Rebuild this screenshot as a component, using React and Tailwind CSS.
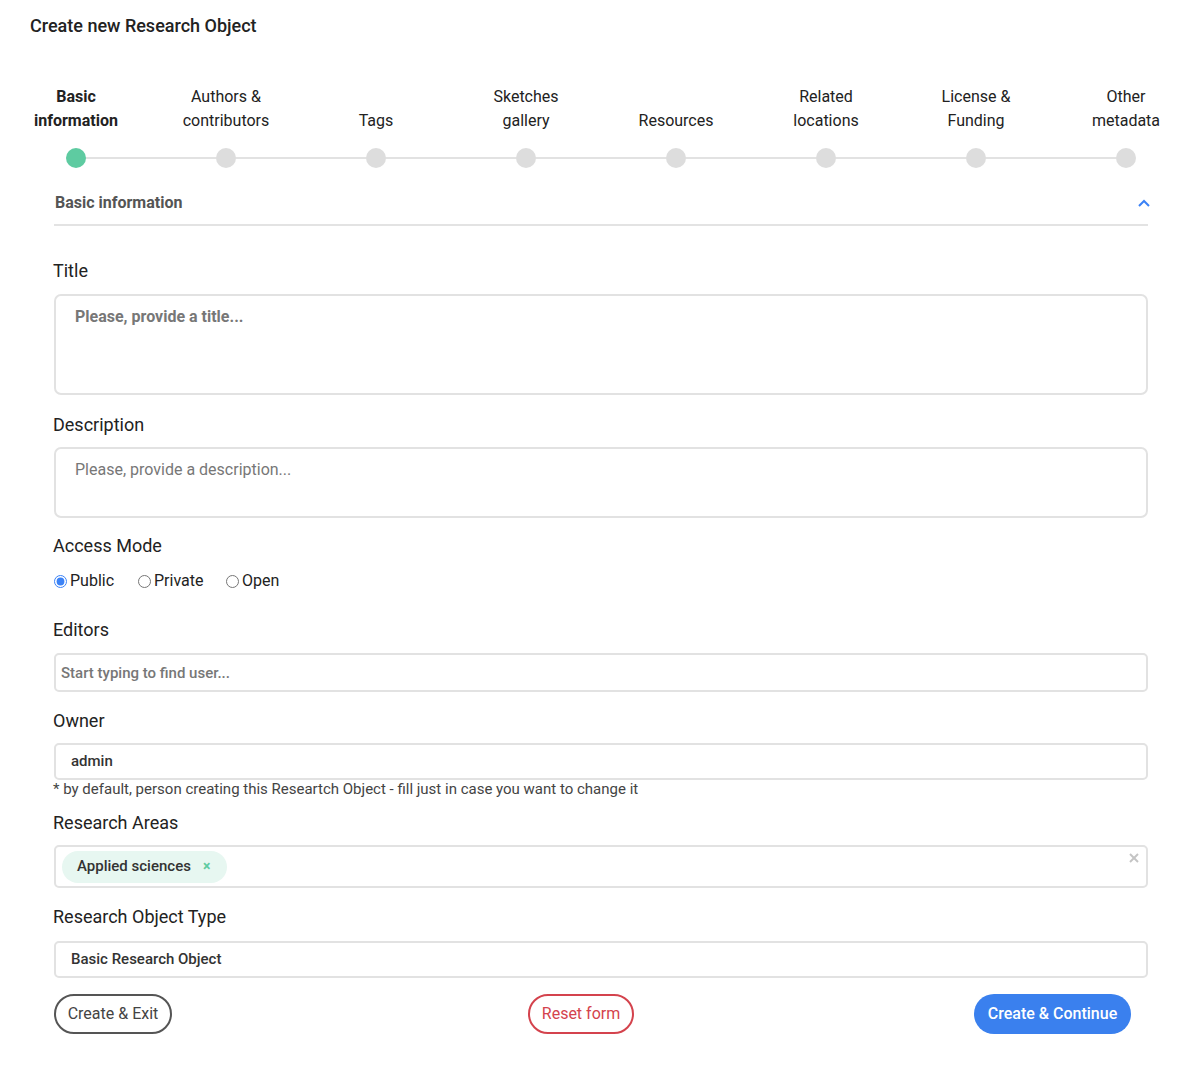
import { useState } from 'react'

const steps = [
  ['Basic', 'information'],
  ['Authors &', 'contributors'],
  ['Tags'],
  ['Sketches', 'gallery'],
  ['Resources'],
  ['Related', 'locations'],
  ['License &', 'Funding'],
  ['Other', 'metadata'],
]

function Label({ children, className = '' }) {
  return (
    <div className={`text-[18px] leading-6 text-[#222] ${className}`}>{children}</div>
  )
}

export default function App() {
  const [access, setAccess] = useState('public')

  return (
    <div className="w-[1194px] min-h-[1074px] overflow-hidden bg-white font-['Roboto','Liberation_Sans',sans-serif] text-[#222]">
      {/* header */}
      <div className="px-[30px] pt-[14px] text-[18px] leading-6 font-medium text-[#222]">
        Create new Research Object
      </div>

      {/* stepper */}
      <div className="mt-[47px] ml-[1px] w-[1200px]">
        <div className="grid grid-cols-[repeat(8,150px)]">
          {steps.map((lines, i) => (
            <div
              key={i}
              className={`h-12 flex flex-col justify-end items-center text-center text-[16px] leading-6 ${
                i === 0 ? 'font-bold text-[#222]' : 'text-[#222]'
              }`}
            >
              {lines.map((l) => (
                <span key={l}>{l}</span>
              ))}
            </div>
          ))}
        </div>
        <div className="relative mt-[15px] grid grid-cols-[repeat(8,150px)]">
          <div className="absolute left-[75px] right-[75px] top-[9px] h-[2px] bg-[#e2e2e2]" />
          {steps.map((_, i) => (
            <div key={i} className="flex justify-center">
              <div
                className={`relative w-5 h-5 rounded-full ${i === 0 ? 'bg-[#5ecba1]' : 'bg-[#dddddd]'}`}
              />
            </div>
          ))}
        </div>
      </div>

      <div className="ml-[54px] w-[1094px]">
        {/* section header */}
        <div className="mt-[23px] flex items-center justify-between border-b-2 border-[#e3e3e3] pb-[9px]">
          <span className="pl-[1px] text-[16px] leading-6 font-bold text-[#555]">Basic information</span>
          <svg className="mr-[-3px] w-[14px] h-[10px]" viewBox="0 0 14 10" fill="none" stroke="#3b82f6" strokeWidth="2">
            <polyline points="2,8 7,3 12,8" />
          </svg>
        </div>

        {/* title */}
        <Label className="mt-[33px] -ml-[1px]">Title</Label>
        <textarea
          className="mt-[11px] block w-full h-[101px] resize-none rounded-[7px] border-2 border-[#e2e2e2] px-[19px] py-[10px] text-[16px] leading-[22px] outline-none placeholder:font-bold placeholder:text-[#777]"
          placeholder="Please, provide a title..."
        />

        {/* description */}
        <Label className="mt-[18px] -ml-[1px]">Description</Label>
        <textarea
          className="mt-[10px] block w-full h-[71px] resize-none rounded-[7px] border-2 border-[#e2e2e2] px-[19px] py-[10px] text-[16px] leading-[22px] outline-none placeholder:text-[#777]"
          placeholder="Please, provide a description..."
        />

        {/* access mode */}
        <Label className="mt-[16px] -ml-[1px]">Access Mode</Label>
        <div className="mt-[13px] flex items-center h-5 text-[16px] text-[#222]">
          {[
            ['public', 'Public', 'w-[84px]'],
            ['private', 'Private', 'w-[88px]'],
            ['open', 'Open', ''],
          ].map(([v, l, w]) => (
            <label key={v} className={`flex items-center gap-[3px] ${w}`}>
              <input
                type="radio"
                name="access"
                checked={access === v}
                onChange={() => setAccess(v)}
                className="m-0 w-[13px] h-[13px] accent-[#3b82f6]"
              />
              {l}
            </label>
          ))}
        </div>

        {/* editors */}
        <Label className="mt-[27px] -ml-[1px]">Editors</Label>
        <input
          className="mt-[11px] block w-full h-[39px] rounded-[5px] border-2 border-[#e2e2e2] px-[5px] text-[15px] font-medium outline-none placeholder:text-[#777]"
          placeholder="Start typing to find user..."
        />

        {/* owner */}
        <Label className="mt-[17px] -ml-[1px]">Owner</Label>
        <div className="mt-[10px] flex items-center w-full h-[37px] rounded-[5px] border-2 border-[#e2e2e2] px-[15px] text-[15px] font-medium text-[#333]">
          admin
        </div>
        <div className="-ml-[1px] text-[15px] leading-[18px] text-[#444]">
          * by default, person creating this Researtch Object - fill just in case you want to change it
        </div>

        {/* research areas */}
        <Label className="mt-[13px] -ml-[1px]">Research Areas</Label>
        <div className="mt-[10px] relative flex items-center w-full h-[43px] rounded-[5px] border-2 border-[#e2e2e2] px-[6px]">
          <div className="flex items-center h-[32px] rounded-full bg-[#e7f7f1] pl-[15px] pr-[17px] text-[15px] font-medium text-[#333]">
            Applied sciences
            <span className="ml-[12px] text-[14px] font-bold text-[#5ecba1]">×</span>
          </div>
          <svg className="absolute right-[7px] top-[6px] w-[10px] h-[10px]" viewBox="0 0 10 10" stroke="#c4c4c4" strokeWidth="2">
            <line x1="1" y1="1" x2="9" y2="9" />
            <line x1="9" y1="1" x2="1" y2="9" />
          </svg>
        </div>

        {/* research object type */}
        <Label className="mt-[17px] -ml-[1px]">Research Object Type</Label>
        <div className="mt-[12px] flex items-center w-full h-[37px] rounded-[5px] border-2 border-[#e2e2e2] px-[15px] text-[15px] font-medium text-[#333]">
          Basic Research Object
        </div>

        {/* buttons */}
        <div className="mt-[16px] flex items-center">
          <button className="h-[40px] w-[118px] rounded-full border-2 border-[#555] text-[16px] text-[#444]">
            Create &amp; Exit
          </button>
          <button className="ml-[356px] h-[40px] w-[106px] rounded-full border-2 border-[#d4434d] text-[16px] text-[#d4434d]">
            Reset form
          </button>
          <button className="ml-[340px] h-[40px] w-[157px] rounded-full bg-[#3a80ee] text-[16px] font-medium text-white">
            Create &amp; Continue
          </button>
        </div>
      </div>
    </div>
  )
}
